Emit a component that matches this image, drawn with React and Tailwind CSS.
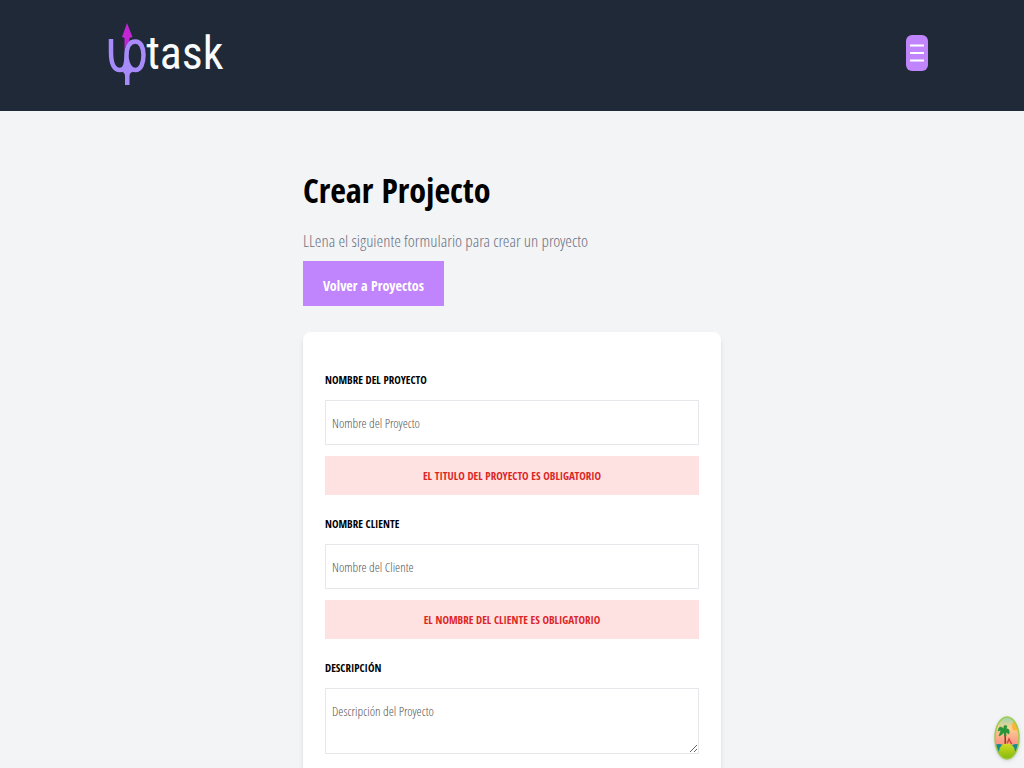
import React from "react";

const fields = [
  {
    id: "projectName",
    label: "Nombre del Proyecto",
    placeholder: "Nombre del Proyecto",
    error: "El titulo del proyecto es obligatorio",
  },
  {
    id: "clientName",
    label: "Nombre Cliente",
    placeholder: "Nombre del Cliente",
    error: "El nombre del cliente es obligatorio",
  },
];

const labelClass = "mb-2 block text-[11px] leading-6 font-bold uppercase";
const controlClass =
  "block w-full border border-gray-200 bg-white px-1.5 font-['Open_Sans_Condensed_Light','Roboto_Condensed','Open_Sans',sans-serif] text-[13px] font-light placeholder:text-[#555555] focus:outline-purple-400";

function Logo() {
  return (
    <a href="/" className="flex items-center text-slate-50" aria-label="uptask">
      <svg className="h-16 w-[38px]" viewBox="0 0 38 64" fill="none" aria-hidden="true">
        <path
          d="M3 16V29C3 40 6 47 12 47C17 47 18.500 41 18.500 33C18.500 23 22 18.500 27.500 18.500C32.500 18.500 35.500 24 35.500 32C35.500 40 33 47 27.500 47C22 47 19.500 41 18.500 35"
          stroke="#a78bfa"
          strokeWidth="4.5"
        />
        <path d="M13 48.500Q19.500 47 27 48.500L23 49.500Q21.500 50.500 21.500 53V62H17V53Q17 50.500 15.500 49.500Z" fill="#a78bfa" />
        <path d="M16 46L19 42L23 46V50H16Z" fill="#a78bfa" />
        <path d="M19 0L24.500 14L21.500 15V18Q18 21 16.500 27V15L14 14Z" fill="#c026d3" />
      </svg>
      <span className="pb-1 font-['Roboto_Condensed','Lato',sans-serif] text-[46px] leading-none">
        task
      </span>
    </a>
  );
}

function IslandBadge() {
  return (
    <button type="button" aria-label="Isla" className="fixed right-1 bottom-2 drop-shadow">
      <svg className="h-11 w-[26px]" viewBox="0 0 26 44" aria-hidden="true">
        <defs>
          <linearGradient id="sky" x1="0" y1="0" x2="0" y2="1">
            <stop offset="0" stopColor="#8bd9b0" />
            <stop offset=".28" stopColor="#fcd092" />
            <stop offset=".6" stopColor="#fb9a86" />
          </linearGradient>
          <linearGradient id="hill" x1="0" y1="0" x2="0" y2="1">
            <stop offset="0" stopColor="#d5dc20" />
            <stop offset="1" stopColor="#7fb80e" />
          </linearGradient>
          <clipPath id="oval">
            <ellipse cx="13" cy="22" rx="12" ry="21" />
          </clipPath>
        </defs>
        <g clipPath="url(#oval)">
          <path d="M0 0H26V44H0Z" fill="url(#sky)" />
          <ellipse cx="21" cy="10" rx="3" ry="4.5" fill="#fbb434" />
          <path d="M0 29Q5 27 9 29T18 29T26 29V44H0Z" fill="#168a91" />
          <path d="M10 14Q12 21 11 30" stroke="#8a3d23" strokeWidth="1.6" fill="none" />
          <path
            d="M10 13Q5 8 4 15L7 14L5 20Q8 19 10 16Q10 21 12 20L12 16L15 18Q16 12 12 13L13 10Q9 8 10 13Z"
            fill="#26963a"
            stroke="#26963a"
            strokeWidth=".6"
          />
          <path d="M13 28L15 23L17 27L18 28" stroke="#ce473c" strokeWidth="1.4" fill="none" />
          <ellipse cx="13" cy="35.500" rx="8" ry="8" fill="url(#hill)" />
        </g>
        <ellipse cx="13" cy="22" rx="12" ry="21" fill="none" stroke="#a2c94a" strokeWidth="1.5" />
      </svg>
    </button>
  );
}

export default function App() {
  return (
    <div className="min-h-screen bg-[#f3f4f6] font-['Open_Sans_Condensed','Open_Sans',sans-serif] text-black">
      <header className="bg-[#1f2937] pt-[23px] pb-6">
        <div className="mx-auto flex w-[82%] items-start justify-between pr-1 pl-4">
          <Logo />
          <button
            type="button"
            aria-label="Menú"
            className="mt-3 flex h-9 w-[22px] items-center justify-center rounded-md bg-[#c084fc]"
          >
            <svg className="h-6 w-4" viewBox="0 0 16 24" stroke="white" strokeWidth="2" aria-hidden="true">
              <path d="M1 4.500H15M1 12H15M1 19.500H15" />
            </svg>
          </button>
        </div>
      </header>

      <main className="mx-auto w-full max-w-[418px] pt-[54px]">
        <h1 className="text-[34px] leading-[50px] font-bold">Crear Projecto</h1>
        <p className="mt-2.5 font-['Open_Sans_Condensed_Light','Roboto_Condensed','Open_Sans',sans-serif] text-[17px] leading-8 font-light text-gray-500">
          LLena el siguiente formulario para crear un proyecto
        </p>
        <nav className="mt-1 flex">
          <a
            href="/"
            className="bg-[#c084fc] px-5 pt-3 pb-2 text-sm leading-[25px] font-bold text-white"
          >
            Volver a Proyectos
          </a>
        </nav>

        <form className="mt-[26px] rounded-lg bg-white px-[22px] py-9 shadow-md" noValidate>
          {fields.map((field) => (
            <div key={field.id} className="mb-[17px]">
              <label htmlFor={field.id} className={labelClass}>
                {field.label}
              </label>
              <input
                id={field.id}
                type="text"
                placeholder={field.placeholder}
                className={`${controlClass} h-[45px]`}
              />
              <p
                role="alert"
                className="mt-[11px] bg-[#fee2e2] text-center text-[11px] leading-[39px] font-bold text-[#dc2626] uppercase"
              >
                {field.error}
              </p>
            </div>
          ))}
          <label htmlFor="description" className={labelClass}>
            Descripción
          </label>
          <textarea
            id="description"
            placeholder="Descripción del Proyecto"
            className={`${controlClass} h-[66px] py-3 leading-5`}
          />
        </form>
      </main>
      <IslandBadge />
    </div>
  );
}
